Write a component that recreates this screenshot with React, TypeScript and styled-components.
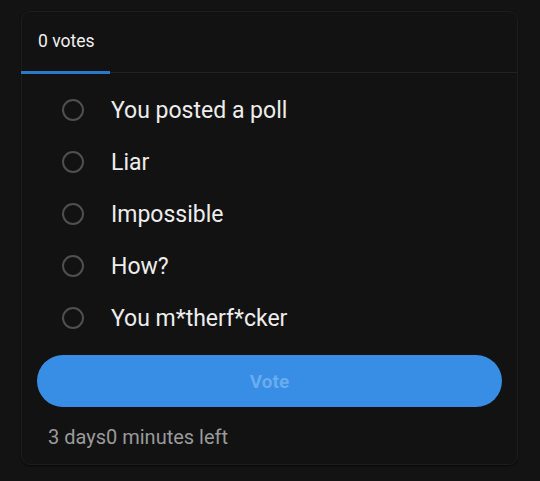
import React from "react";
import styled, { createGlobalStyle } from "styled-components";

const Global = createGlobalStyle`
  html, body { margin: 0; padding: 0; background: #131313; }
  body { font-family: Roboto, "Noto Sans", sans-serif; width: 540px; height: 481px; overflow: hidden; }
`;

const Page = styled.div`
  padding: 11px 22px 16px 21px;
  box-sizing: border-box;
  height: 481px;
`;

const Card = styled.div`
  background: #121212;
  border: 1px solid #1d1d1d;
  border-radius: 9px;
  box-shadow: 0 1px 2px rgba(0, 0, 0, 0.6);
  height: 454px;
  box-sizing: border-box;
  display: flex;
  flex-direction: column;
`;

const Tabs = styled.div`
  display: flex;
  border-bottom: 1px solid #222;
  height: 61px;
  box-sizing: border-box;
`;

const Tab = styled.div<{ $active?: boolean }>`
  width: 89px;
  margin-left: -1px;
  box-sizing: border-box;
  padding-left: 17px;
  display: flex;
  align-items: center;
  font-size: 17.5px;
  font-weight: 400;
  color: #f0f0f0;
  border-bottom: 3px solid ${(p) => (p.$active ? "#2a78c8" : "transparent")};
  margin-bottom: -2px;
  padding-bottom: 1px;
`;

const Options = styled.div`
  display: flex;
  flex-direction: column;
  padding: 11px 0 0 0;
`;

const Option = styled.label`
  display: flex;
  align-items: center;
  height: 52px;
  padding-left: 40px;
  cursor: pointer;
`;

const Radio = styled.span`
  width: 18px;
  height: 18px;
  border-radius: 50%;
  border: 2px solid #4f4f4f;
  flex: none;
`;

const OptionText = styled.span`
  margin-left: 27px;
  font-size: 23px;
  font-weight: 400;
  color: #ededed;
`;

const VoteButton = styled.button`
  margin: 11px 15px 0 15px;
  height: 52px;
  border: none;
  border-radius: 26px;
  background: #378ee4;
  color: #69acef;
  font-family: Roboto, "Noto Sans", sans-serif;
  font-size: 19px;
  font-weight: 700;
`;

const Footer = styled.div`
  margin: 18px 0 0 26px;
  font-size: 20px;
  color: #9a9a9a;
`;

const options = ["You posted a poll", "Liar", "Impossible", "How?", "You m*therf*cker"];

export default function App() {
  return (
    <>
      <Global />
      <Page>
        <Card>
          <Tabs>
            <Tab $active>0 votes</Tab>
          </Tabs>
          <Options>
            {options.map((o) => (
              <Option key={o}>
                <Radio />
                <OptionText>{o}</OptionText>
              </Option>
            ))}
          </Options>
          <VoteButton>Vote</VoteButton>
          <Footer>3 days0 minutes left</Footer>
        </Card>
      </Page>
    </>
  );
}
